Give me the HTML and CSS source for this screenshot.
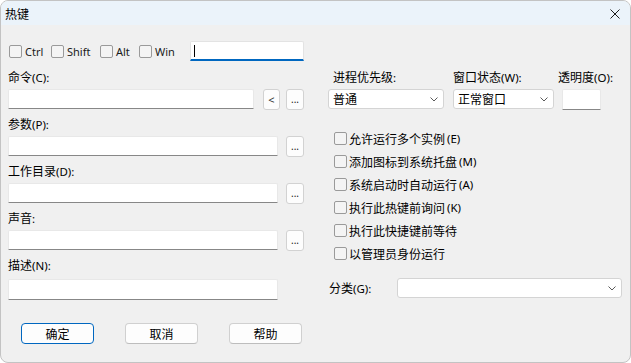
FILE: index.html
```html
<!DOCTYPE html>
<html lang="zh-CN">
<head>
<meta charset="utf-8">
<title>热键</title>
<link rel="stylesheet" href="styles.css">
</head>
<body>
<div class="window">
  <div class="titlebar">
    <span class="title">热键</span>
    <span class="close">
      <svg width="10" height="10" viewBox="0 0 10 10"><path d="M0.5 0.5 L9.5 9.5 M9.5 0.5 L0.5 9.5" stroke="#1b1b1b" stroke-width="1" fill="none"/></svg>
    </span>
  </div>
  <div class="content">
    <div class="hotkey-row">
      <label class="mod mod-ctrl"><span class="box"></span><span class="latin">Ctrl</span></label>
      <label class="mod mod-shift"><span class="box"></span><span class="latin">Shift</span></label>
      <label class="mod mod-alt"><span class="box"></span><span class="latin">Alt</span></label>
      <label class="mod mod-win"><span class="box"></span><span class="latin">Win</span></label>
      <div class="hotkey-input"><span class="caret"></span></div>
    </div>
    <div class="columns">
      <div class="left-col">
        <div class="field">
          <div class="label">命令<span class="latin">(C):</span></div>
          <div class="row">
            <div class="input input-cmd"></div>
            <button class="small-btn lt">&lt;</button>
            <button class="small-btn dots">...</button>
          </div>
        </div>
        <div class="field">
          <div class="label">参数<span class="latin">(P):</span></div>
          <div class="row">
            <div class="input"></div>
            <button class="small-btn dots">...</button>
          </div>
        </div>
        <div class="field">
          <div class="label">工作目录<span class="latin">(D):</span></div>
          <div class="row">
            <div class="input"></div>
            <button class="small-btn dots">...</button>
          </div>
        </div>
        <div class="field">
          <div class="label">声音<span class="latin">:</span></div>
          <div class="row">
            <div class="input"></div>
            <button class="small-btn dots">...</button>
          </div>
        </div>
        <div class="field field-last">
          <div class="label">描述<span class="latin">(N):</span></div>
          <div class="row">
            <div class="input input-tall"></div>
          </div>
        </div>
        <div class="buttons">
          <button class="btn default">确定</button>
          <button class="btn">取消</button>
          <button class="btn">帮助</button>
        </div>
      </div>
      <div class="right-col">
        <div class="top-groups">
          <div class="group g-priority">
            <div class="label">进程优先级<span class="latin">:</span></div>
            <div class="combo"><span class="val">普通</span><svg class="chev" width="8" height="5" viewBox="0 0 8 5"><path d="M0.5 0.5 L4 4 L7.5 0.5" stroke="#5a5a5a" stroke-width="1" fill="none"/></svg></div>
          </div>
          <div class="group g-state">
            <div class="label">窗口状态<span class="latin">(W):</span></div>
            <div class="combo"><span class="val">正常窗口</span><svg class="chev" width="8" height="5" viewBox="0 0 8 5"><path d="M0.5 0.5 L4 4 L7.5 0.5" stroke="#5a5a5a" stroke-width="1" fill="none"/></svg></div>
          </div>
          <div class="group g-opacity">
            <div class="label">透明度<span class="latin">(O):</span></div>
            <div class="input input-opacity"></div>
          </div>
        </div>
        <div class="checks">
          <label class="check"><span class="box"></span>允许运行多个实例<span class="latin">(E)</span></label>
          <label class="check"><span class="box"></span>添加图标到系统托盘<span class="latin">(M)</span></label>
          <label class="check"><span class="box"></span>系统启动时自动运行<span class="latin">(A)</span></label>
          <label class="check"><span class="box"></span>执行此热键前询问<span class="latin">(K)</span></label>
          <label class="check"><span class="box"></span>执行此快捷键前等待</label>
          <label class="check"><span class="box"></span>以管理员身份运行</label>
        </div>
        <div class="category-row">
          <div class="label cat-label">分类<span class="latin">(G):</span></div>
          <div class="combo combo-cat"><svg class="chev" width="8" height="5" viewBox="0 0 8 5"><path d="M0.5 0.5 L4 4 L7.5 0.5" stroke="#5a5a5a" stroke-width="1" fill="none"/></svg></div>
        </div>
      </div>
    </div>
  </div>
</div>
</body>
</html>
```

FILE: styles.css
```css
* { box-sizing: border-box; }

html, body {
  margin: 0;
  padding: 0;
  background: #ffffff;
}

body {
  font-family: "Noto Sans CJK SC", "Noto Sans", sans-serif;
  font-size: 12px;
  color: #000;
}

.latin {
  font-family: "Noto Sans", "Noto Sans CJK SC", sans-serif;
  font-size: 11.5px;
}

.window {
  width: 631px;
  height: 363px;
  border: 1px solid #c3c3c3;
  border-radius: 8px;
  background: #f0f0f0;
  overflow: hidden;
}

.titlebar {
  height: 24px;
  background: #ebf3fa;
  display: flex;
  align-items: center;
  justify-content: space-between;
  padding-left: 4px;
  padding-right: 10px;
}

.title {
  font-size: 12px;
  line-height: 24px;
  margin-top: 1px;
}

.close {
  display: flex;
  width: 10px;
  height: 10px;
  margin-top: 2px;
}

.content {
  padding-left: 7px;
}

/* top row */
.hotkey-row {
  margin-top: 16px;
  height: 20px;
  display: flex;
  align-items: center;
  padding-left: 1px;
}

.mod {
  display: flex;
  align-items: center;
  gap: 3px;
  height: 20px;
}

.mod .latin { font-size: 11px; color: #1a1a1a; }

.mod-ctrl { width: 42px; }
.mod-shift { width: 49px; }
.mod-alt { width: 39px; }
.mod-win { width: 51px; }

.box {
  display: inline-block;
  width: 13px;
  height: 13px;
  border: 1px solid #9a9a9a;
  border-radius: 2px;
  background: #f4f4f4;
  flex: none;
}

.hotkey-input {
  width: 114px;
  height: 20px;
  background: #fff;
  border: 1px solid #e3e3e3;
  border-bottom: 2px solid #0067c0;
  border-radius: 2px 2px 0 0;
  padding: 3px 0 0 3px;
}

.caret {
  display: block;
  width: 1px;
  height: 12px;
  background: #000;
}

/* columns */
.columns {
  display: flex;
  margin-top: 5px;
}

.left-col {
  width: 296px;
}

.field {
  height: 47px;
}

.label {
  height: 23px;
  line-height: 22px;
  white-space: nowrap;
}

.field-last .label {
  height: 25px;
}

.row {
  display: flex;
  align-items: flex-start;
  height: 21px;
}

.input {
  width: 270px;
  height: 20px;
  background: #fff;
  border: 1px solid #e8e8e8;
  border-bottom: 1px solid #878787;
  border-radius: 2px 2px 0 0;
}

.input-cmd {
  width: 246px;
}

.input-tall {
  height: 21px;
}

.small-btn {
  height: 21px;
  width: 18px;
  padding: 0;
  margin: 0 0 0 8px;
  background: #fdfdfd;
  border: 1px solid #d2d2d2;
  border-radius: 3px;
  font-family: "Noto Sans", sans-serif;
  font-size: 10px;
  line-height: 17px;
  color: #1a1a1a;
  text-align: center;
}

.small-btn.lt {
  width: 17px;
  margin-left: 9px;
  color: #333;
  font-size: 11px;
}

.input-cmd + .lt + .dots {
  margin-left: 6px;
}

.buttons {
  display: flex;
  gap: 31px;
  margin-top: 22px;
  padding-left: 13px;
}

.btn {
  width: 73px;
  height: 21px;
  padding: 0;
  margin: 0;
  background: #fdfdfd;
  border: 1px solid #d0d0d0;
  border-bottom-color: #bdbdbd;
  border-radius: 4px;
  font-family: "Noto Sans CJK SC", sans-serif;
  font-size: 12px;
  line-height: 19px;
  color: #000;
}

.btn.default {
  border: 1px solid #0067c0;
}

/* right column */
.right-col {
  margin-left: 24px;
  width: 294px;
}

.top-groups {
  display: flex;
}

.g-priority { width: 116px; }
.g-priority .label { padding-left: 5px; }
.g-state { width: 101px; margin-left: 9px; }
.g-opacity { margin-left: 4px; }

.combo {
  position: relative;
  height: 20px;
  background: #fff;
  border: 1px solid #d4d4d4;
  border-radius: 3px;
  padding-left: 4px;
  line-height: 18px;
  display: flex;
  align-items: center;
}

.combo .chev {
  position: absolute;
  right: 5px;
  top: 7px;
}

.input-opacity {
  width: 39px;
  height: 21px;
  margin-left: 4px;
}

.checks {
  margin-top: 17px;
  padding-left: 6px;
}

.check {
  display: flex;
  align-items: center;
  gap: 2px;
  height: 23px;
  white-space: nowrap;
}

.category-row {
  display: flex;
  align-items: center;
  margin-top: 13px;
  height: 20px;
}

.cat-label {
  width: 69px;
  padding-left: 1px;
  line-height: 20px;
  height: 20px;
}

.combo-cat {
  width: 225px;
}
```
